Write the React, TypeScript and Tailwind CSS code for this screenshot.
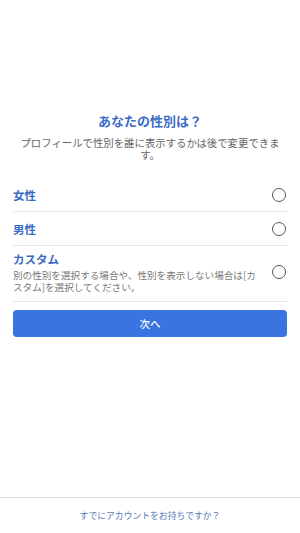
import React, { useState } from 'react';

const options = [
  { id: 'female', label: '女性' },
  { id: 'male', label: '男性' },
  {
    id: 'custom',
    label: 'カスタム',
    desc: '別の性別を選択する場合や、性別を表示しない場合は[カスタム]を選択してください。',
  },
];

const App: React.FC = () => {
  const [selected, setSelected] = useState<string | null>(null);

  return (
    <div className="h-screen w-full bg-white flex flex-col font-['Noto_Sans_CJK_JP','Noto_Sans',sans-serif]">
      <div className="px-[13px] pt-[113px]">
        <h1 className="text-center text-[13px] leading-[16px] font-bold text-[#3b6cc6]">あなたの性別は？</h1>
        <p className="mt-[8px] text-center text-[10.4px] leading-[11.5px] text-[#666]">
          プロフィールで性別を誰に表示するかは後で変更できます。
        </p>

        <div className="mt-[18px]">
          {options.map((opt) => (
            <button
              key={opt.id}
              onClick={() => setSelected(opt.id)}
              className={
                'w-full flex items-center justify-between gap-[8px] border-b border-[#e6e6e6] text-left ' +
                (opt.desc ? 'pt-[5px] pb-[8px]' : 'h-[34px]')
              }
            >
              <div className="flex-1">
                <div className="text-[11.5px] leading-[16px] font-bold text-[#3a6bc4]">{opt.label}</div>
                {opt.desc && (
                  <div className="mt-[2px] text-[9.6px] leading-[12px] text-[#777]">{opt.desc}</div>
                )}
              </div>
              <div className="w-[14px] h-[14px] mr-[1px] rounded-full border-[1.4px] border-[#555] flex items-center justify-center shrink-0">
                {selected === opt.id && <div className="w-[7px] h-[7px] rounded-full bg-[#3b73e0]" />}
              </div>
            </button>
          ))}
        </div>

        <button className="mt-[8px] w-full h-[27px] rounded-[4px] bg-[#3a74e1] text-white text-[10.5px] font-medium">
          次へ
        </button>
      </div>

      <div className="flex-1" />

      <div className="h-[36px] border-t border-[#dcdcdc] flex items-center justify-center">
        <span className="text-[8.8px] text-[#5a7ab5]">すでにアカウントをお持ちですか？</span>
      </div>
    </div>
  );
};

export default App;
